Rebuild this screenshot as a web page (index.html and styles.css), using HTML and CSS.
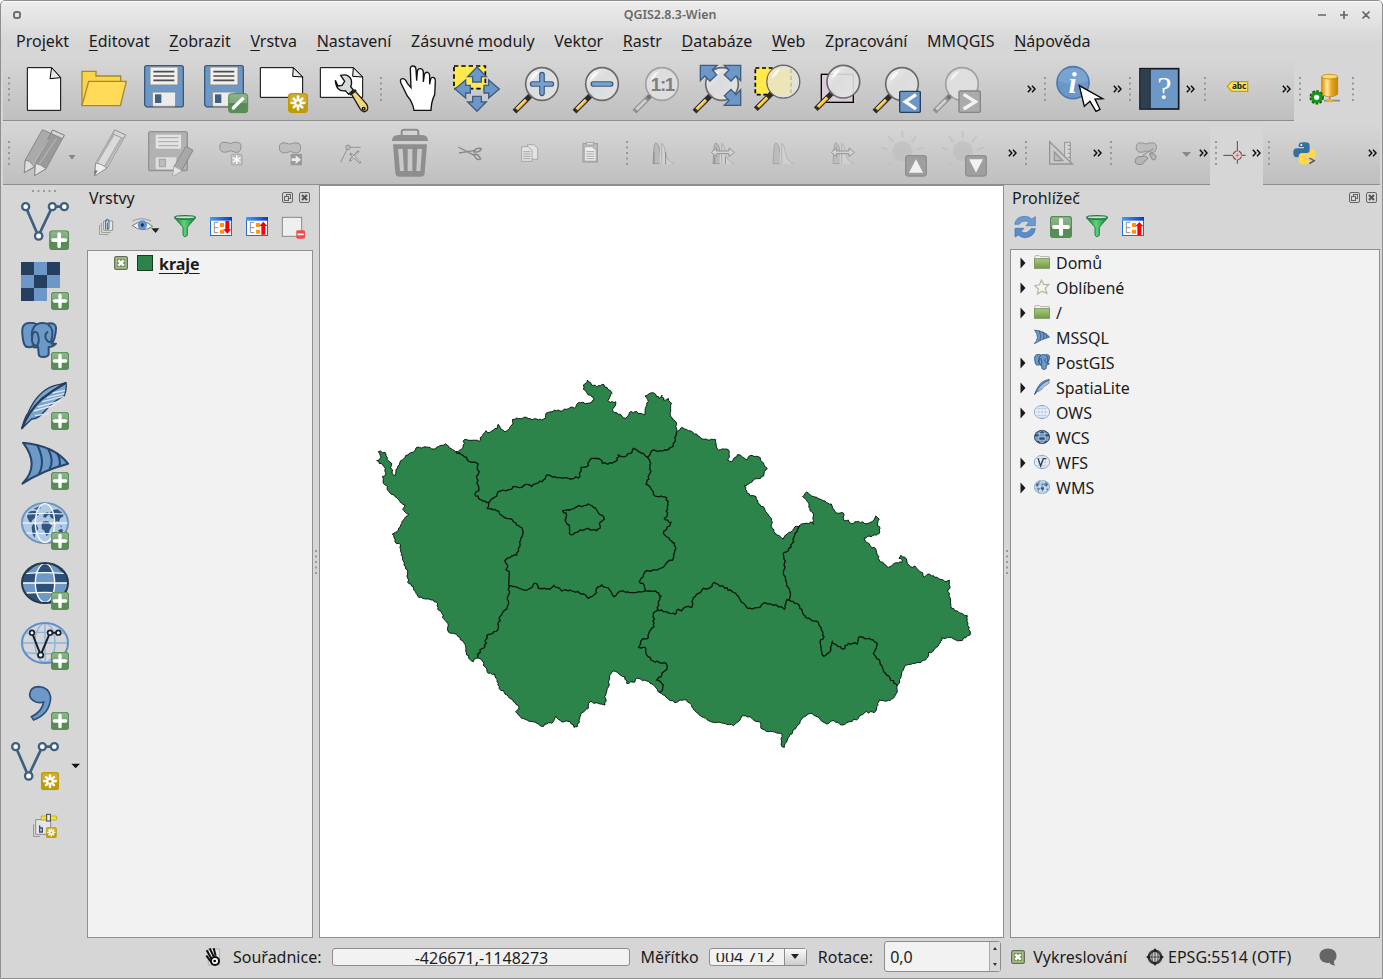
FILE: index.html
```html
<!DOCTYPE html>
<html lang="cs">
<head>
<meta charset="utf-8">
<title>QGIS2.8.3-Wien</title>
<link rel="stylesheet" href="styles.css">
</head>
<body>
<svg class="defs" width="0" height="0">
  <defs>
    <linearGradient id="gGreen" x1="0" y1="0" x2="0" y2="1"><stop offset="0" stop-color="#8db58d"/><stop offset=".5" stop-color="#79a679"/><stop offset=".52" stop-color="#568a52"/><stop offset="1" stop-color="#5b8f58"/></linearGradient>
    <linearGradient id="gLens" x1="0" y1="0" x2="1" y2="1"><stop offset="0" stop-color="#f6f6f6"/><stop offset=".4" stop-color="#dedede"/><stop offset="1" stop-color="#e6e6e6"/></linearGradient>
    <linearGradient id="gFunnel"><stop offset="0" stop-color="#1d7a3c"/><stop offset=".45" stop-color="#5ed37c"/><stop offset="1" stop-color="#17803a"/></linearGradient>
    <linearGradient id="gDb"><stop offset="0" stop-color="#d99500"/><stop offset=".35" stop-color="#ffe9a0"/><stop offset=".6" stop-color="#e8a820"/><stop offset="1" stop-color="#c98300"/></linearGradient>
    <linearGradient id="gFold" x1="0" y1="0" x2="0" y2="1"><stop offset="0" stop-color="#aacb7f"/><stop offset="1" stop-color="#6f9c3d"/></linearGradient>
    <linearGradient id="gBlueTop"><stop offset="0" stop-color="#3fa0ff"/><stop offset="1" stop-color="#0a38c8"/></linearGradient>
    <symbol id="plus" viewBox="0 0 54 54"><rect x="1" y="1" width="52" height="52" rx="8" fill="url(#gGreen)" stroke="#568a52" stroke-width="3"/><path d="M27 10v34M10 27h34" stroke="#fff" stroke-width="10" stroke-linecap="round"/></symbol>
    <symbol id="newb" viewBox="0 0 60 60"><rect x="2" y="2" width="56" height="56" rx="9" fill="#cfae2f" stroke="#c09a00" stroke-width="4"/><path d="M4 30h52v18q0 8-8 8H12q-8 0-8-8z" fill="#c09a00"/><path d="M30 11v38M11 30h38M17 17l26 26M43 17L17 43" stroke="#fff" stroke-width="8" stroke-linecap="round"/><circle cx="30" cy="30" r="5" fill="#c09a00"/></symbol>
    <symbol id="disk" viewBox="0 0 120 128"><path d="M8 2h104q6 0 6 6v112q0 6-6 6H8l-6-6V8q0-6 6-6z" fill="#6d97c4" stroke="#3b5a7c" stroke-width="4"/><path d="M18 6h84v50q0 4-4 4H22q-4 0-4-4z" fill="#f0f0ee" stroke="#8a8a8a" stroke-width="3"/><path d="M28 20h63M28 33h63M28 46h63" stroke="#4d4d4d" stroke-width="5"/><rect x="25" y="81" width="70" height="43" rx="4" fill="#ececec" stroke="#8d8d8d" stroke-width="3"/><rect x="33" y="88" width="19" height="26" fill="#3f5f83"/></symbol>
    <g id="mag"><path d="M-36 36L-77 77" stroke="#2a2a2a" stroke-width="16" stroke-linecap="square"/><path d="M-48 48L-76 76" stroke="#ffc62e" stroke-width="9"/><path d="M-50 46L-78 74" stroke="#fff2b8" stroke-width="3"/><circle r="49" fill="url(#gLens)" fill-opacity=".9" stroke="#6a6a6a" stroke-width="5"/><path d="M-36-8Q-32-34-8-38Q-18-20-36-8z" fill="#fff" fill-opacity=".8"/></g>
    <g id="magGrey"><path d="M-36 36L-77 77" stroke="#8f8f8f" stroke-width="16" stroke-linecap="square"/><path d="M-48 48L-77 77" stroke="#cfcfcf" stroke-width="9"/><circle r="49" fill="#dedede" stroke="#a0a0a0" stroke-width="5"/><path d="M-36-8Q-32-34-8-38Q-18-20-36-8z" fill="#f3f3f3"/><circle cx="-39" cy="39" r="6" fill="#707070"/></g>
    <symbol id="vshape" viewBox="0 0 150 124"><path d="M17 18L55 106L97 18H133" fill="none" stroke="#3f5f80" stroke-width="8"/><g fill="#fff" stroke="#3f5f80" stroke-width="7"><circle cx="17" cy="18" r="10.500"/><circle cx="97" cy="18" r="10.500"/><circle cx="133" cy="18" r="10.500"/><circle cx="56" cy="106" r="11"/></g></symbol>
    <symbol id="chev" viewBox="0 0 9 8"><path d="M.8.8L3.800 4L.8 7.200M5 .8L8 4L5 7.200" fill="none" stroke="#111" stroke-width="1.500"/></symbol>
    <symbol id="dotsV" viewBox="0 0 2 24"><path d="M0 1h2M0 6.500h2M0 12h2M0 17.500h2M0 23h2" stroke="#989898" stroke-width="2"/></symbol>
    <symbol id="dotsH" viewBox="0 0 24 2"><path d="M1 0v2M6.500 0v2M12 0v2M17.500 0v2M23 0v2" stroke="#989898" stroke-width="2"/></symbol>
    <symbol id="funnel" viewBox="0 0 66 68"><ellipse cx="33" cy="7" rx="31" ry="5" fill="#bdebc6" stroke="#1f7a3d" stroke-width="4"/><path d="M2 9Q33 19 64 9L40 37V61L32 66L27 60V37z" fill="url(#gFunnel)" stroke="#2a7d45" stroke-width="3"/></symbol>
    <symbol id="treeic" viewBox="0 0 66 57"><rect x="1.500" y="1.500" width="63" height="54" fill="#fff" stroke="#2668d8" stroke-width="3"/><rect width="66" height="11" fill="url(#gBlueTop)"/><path d="M25 16H13V47H25M13 32h12" fill="none" stroke="#909090" stroke-width="3"/><path d="M30 18h12v12H30zM30 38h12v12H30z" fill="#ff9416"/></symbol>
    <symbol id="float" viewBox="0 0 11 11"><rect x=".5" y=".5" width="10" height="10" rx="1.500" fill="none" stroke="#666"/><rect x="4.500" y="2.500" width="4" height="4" fill="none" stroke="#666"/><rect x="2.500" y="4.500" width="4" height="4" fill="#d6d6d6" stroke="#666"/></symbol>
    <symbol id="closeic" viewBox="0 0 11 11"><rect x=".5" y=".5" width="10" height="10" rx="1.500" fill="none" stroke="#666"/><path d="M3 3l5 5M8 3l-5 5" stroke="#555" stroke-width="2"/></symbol>
    <symbol id="check" viewBox="0 0 42 42"><rect x="2" y="2" width="38" height="38" rx="5" fill="#adc588" stroke="#666b5c" stroke-width="4"/><rect x="10" y="10" width="22" height="22" fill="#5f7a4b" stroke="#71905a" stroke-width="3"/><path d="M13 13l16 16M29 13L13 29" stroke="#fff" stroke-width="8"/></symbol>
    <symbol id="arrowR" viewBox="0 0 6 12"><path d="M.5.500L5.500 6L.5 11.500z" fill="#1b1b1b"/></symbol>
    <symbol id="folder" viewBox="0 0 48 42"><path d="M2 8L4 2H16L19 5H46V20H2z" fill="#f5f5f5" stroke="#b1b1b1" stroke-width="3"/><rect x="1.500" y="11" width="45" height="29" fill="url(#gFold)" stroke="#86946f" stroke-width="3"/></symbol>
    <symbol id="sail" viewBox="0 0 144 130"><path d="M5 3Q100 12 140 66Q60 88 3 126Q58 72 5 3z" fill="#6d99c8" stroke="#27446a" stroke-width="6" stroke-linejoin="round"/><path d="M47 9Q74 60 52 98M80 20Q100 60 84 82M107 34Q120 58 114 74" fill="none" stroke="#27446a" stroke-width="6"/></symbol>
    <symbol id="elephant" viewBox="0 0 110 110"><path d="M23 76Q8 80 5 35Q1 3 30 3Q42 3 48 8Q64 1 78 6Q108 0 106 22Q104 55 92 66H106Q98 76 84 76V98Q82 106 68 106Q54 106 54 96L52 74Q44 82 36 73Q29 79 23 76z" fill="#6d99c8" stroke="#2e5078" stroke-width="6" stroke-linejoin="round"/><path d="M48 8Q30 18 34 56Q36 73 48 72Q60 60 50 34Q34 20 34 60M82 9Q102 20 92 58Q84 66 76 52Q70 38 82 30" fill="none" stroke="#2e5078" stroke-width="6"/></symbol>
    <symbol id="feather" viewBox="0 0 140 144"><path d="M3 140Q10 108 22 92Q50 28 100 12Q122 8 135 3Q138 22 130 42Q98 58 72 88Q52 112 32 112Z" fill="#7ca6d2" stroke="#27405c" stroke-width="4"/><path d="M42 102l42-6M38 88l66-18M50 76l70-18M64 60l64-16M78 48l52-12M94 34l38-8" stroke="#dce9f6" stroke-width="4"/><path d="M3 140Q22 90 62 52Q94 26 135 3" fill="none" stroke="#263c56" stroke-width="7"/></symbol>
    <symbol id="gdark" viewBox="0 0 144 126"><ellipse cx="72" cy="63" rx="69" ry="60" fill="#2d5078"/><path d="M46 33h52l3 30H43zM4 63H43q0 15 4 29H16Q5 80 4 63zM140 63H101q0 15-4 29h31Q139 80 140 63zM47 92h50q-8 22-25 30q-17-8-25-30zM20 32Q40 10 60 6Q50 15 47 32zM124 32Q104 10 84 6Q94 15 97 32z" fill="#6d99c8"/><path d="M16 34Q72 30 128 34M4 63h136M16 93q56-4 112 0" fill="none" stroke="#fff" stroke-width="4"/><ellipse cx="72" cy="63" rx="29" ry="58" fill="none" stroke="#fff" stroke-width="4"/><ellipse cx="72" cy="63" rx="69" ry="60" fill="none" stroke="#28394e" stroke-width="6"/></symbol>
    <symbol id="gline" viewBox="0 0 144 126"><g fill="none" stroke="#8db2dd" stroke-width="4"><ellipse cx="72" cy="63" rx="30" ry="59"/><path d="M15 34q57-7 114 0M3 63h138M15 92q57 7 114 0M72 4v118"/></g><ellipse cx="72" cy="63" rx="69" ry="60" fill="none" stroke="#5d8fcb" stroke-width="6"/></symbol>
    <symbol id="gland" viewBox="0 0 144 126"><ellipse cx="72" cy="63" rx="69" ry="60" fill="#b0cae6" stroke="#6e95c2" stroke-width="6"/><path d="M20 34l8-6 12-2 10 4 4 8-8 4-4 6-8 6-4 10-6-6-6-14zM38 20l18-8 4 6-10 6zM36 66l12 4 4 10-8 12-4 16-6-14-2-18zM62 66l6-8 14 0 6 10 6 2-8 14-4 14-6 4-6-16-8-6zM66 44l4-10 10-4 6 6-8 6-4 6zM86 34l10-10 14-2 18 14-2 8-8 4-4 12-6-4-4 6-6-12-8-2-4-8zM112 84l12-4 2 12-10 4zM116 70l8 4-4 2z" fill="#315780"/><ellipse cx="72" cy="63" rx="29" ry="58" fill="none" stroke="#fff" stroke-width="4"/><path d="M16 36q56-4 112 0M4 63h136M16 93q56 4 112 0" fill="none" stroke="#fff" stroke-width="3"/></symbol>
    <symbol id="curve" viewBox="0 0 70 70"><path d="M3 67L5 35Q6 2 12 3Q26 4 28 67z" fill="#b9b9b9" stroke="#8c8c8c" stroke-width="2"/><path d="M24 67Q24 10 31 3Q39 4 44 40Q52 64 69 67z" fill="#d3d3d3"/><path d="M30 66V4Q38 8 42 38Q50 64 69 67" fill="none" stroke="#a6a6a6" stroke-width="2.500"/></symbol>
    <symbol id="sun" viewBox="0 0 140 140"><circle cx="70" cy="68" r="30" fill="#bdbdbd"/><path d="M70 6v22M28 22l14 18M112 22L98 40M6 56l20 7M134 56l-20 7M28 112l10-10" stroke="#bdbdbd" stroke-width="6"/></symbol>
    <symbol id="blob" viewBox="0 0 70 40"><path d="M3 20Q2 2 22 5Q34 12 46 5Q68 2 67 18Q66 38 50 35Q36 26 24 34Q4 38 3 20z" fill="#bdbdbd" stroke="#929292" stroke-width="3"/></symbol>
  </defs>
</svg>

<div class="window">
  <div class="titlebar">
    <span class="win-menu"></span>
    <span class="title">QGIS2.8.3-Wien</span>
    <svg class="win-btns" width="54" height="10" viewBox="0 0 54 10"><path d="M1 5h8M23 5h8M27 1v8M45.500 1.500l7 7M52.500 1.500l-7 7" stroke="#666" stroke-width="1.700"/></svg>
  </div>
  <div class="menubar">
    <span>Pro<u>j</u>ekt</span><span><u>E</u>ditovat</span><span><u>Z</u>obrazit</span><span><u>V</u>rstva</span><span><u>N</u>astavení</span><span>Zásuvné <u>m</u>oduly</span><span>Vekt<u>o</u>r</span><span><u>R</u>astr</span><span><u>D</u>atabáze</span><span><u>W</u>eb</span><span>Zpra<u>c</u>ování</span><span>MMQGIS</span><span><u>N</u>ápověda</span>
  </div>

  <div class="row">
    <div class="bar bar-main">
      <div class="slot w11"><svg class="dv"><use href="#dotsV"/></svg></div>
      <svg class="ic" viewBox="42 177 180 180"><path d="M82 203H155L182 233V331H82z" fill="#fff" stroke="#000" stroke-width="3"/><path d="M155 203L150 236L182 233z" fill="#e8e8e8" stroke="#000" stroke-width="3"/></svg>
      <svg class="ic" viewBox="222 177 180 180"><path d="M246 317V214h42v14h74v22" fill="#fbd44c" stroke="#a38a2c" stroke-width="4"/><path d="M246 317L266 244H379L361 317z" fill="#ffdb57" stroke="#a38a2c" stroke-width="4"/></svg>
      <svg class="ic" viewBox="402 177 180 180"><use href="#disk" x="432" y="195" width="120" height="128"/></svg>
      <svg class="ic" viewBox="582 177 180 180"><use href="#disk" x="612" y="195" width="120" height="128"/><rect x="686" y="281" width="57" height="57" rx="8" fill="url(#gGreen)" stroke="#568a52" stroke-width="3"/><path d="M700 324l28-28" stroke="#fff" stroke-width="10" stroke-linecap="round"/></svg>
      <svg class="ic" viewBox="762 177 180 180"><path d="M781 203H880L908 231V292H781z" fill="#fff" stroke="#000" stroke-width="3"/><path d="M880 203L878 229L908 231z" fill="#e8e8e8" stroke="#000" stroke-width="3"/><use href="#newb" x="864" y="279" width="60" height="60"/></svg>
      <svg class="ic" viewBox="942 177 180 180"><path d="M961 203H1060L1088 231V292H961z" fill="#fff" stroke="#000" stroke-width="3"/><path d="M1060 203L1058 229L1088 231z" fill="#e8e8e8" stroke="#000" stroke-width="3"/><path d="M1006 241L1014 258L1026 256L1034 244L1022 226Q1046 220 1054 240Q1056 254 1052 260L1060 270L1046 283L1036 272Q1008 276 1006 241z" fill="#d5dbd8" stroke="#111" stroke-width="4"/><path d="M1053 280L1080 326Q1090 342 1102 330Q1106 318 1096 308L1066 274z" fill="#f0d779" stroke="#222" stroke-width="4"/><path d="M1049 284L1068 270" stroke="#222" stroke-width="8"/><circle cx="1091" cy="326" r="4" fill="#f0d779" stroke="#111" stroke-width="4"/></svg>
      <div class="slot w13"><svg class="dv"><use href="#dotsV"/></svg></div>
      <svg class="ic" viewBox="1161 177 180 180"><path d="M1242 331Q1238 306 1222 288L1203 250Q1198 236 1208 236Q1216 236 1222 250L1233 263L1231 206Q1232 197 1240 198Q1247 198 1248 208L1250 242L1252 214Q1254 205 1262 206Q1269 207 1270 216V246L1273 224Q1276 215 1283 217Q1289 219 1289 227V253L1292 237Q1296 230 1302 233Q1307 236 1306 245L1304 284Q1294 304 1293 331z" fill="#fff" stroke="#111" stroke-width="4"/></svg>
      <svg class="ic" viewBox="21 27 180 180"><rect x="42" y="48" width="94" height="68" fill="#ffe94d" stroke="#000" stroke-width="5" stroke-dasharray="13 9"/><path d="M111 51L139 80H124V96H98V80H83zM111 184L139 156H124V139H98V156H83zM45 117L77 90V106H91V129H77V144zM178 117L146 90V106H132V129H146V144z" fill="#6d97c7" stroke="#3d5d85" stroke-width="4"/></svg>
      <svg class="ic" viewBox="201 27 180 180"><use href="#mag" x="306" y="102"/><path d="M306 74v56M278 102h56" stroke="#36587f" stroke-width="17" stroke-linecap="round"/><path d="M306 74v56M278 102h56" stroke="#76a2d2" stroke-width="10" stroke-linecap="round"/></svg>
      <svg class="ic" viewBox="381 27 180 180"><use href="#mag" x="486" y="102"/><path d="M460 102h52" stroke="#36587f" stroke-width="17" stroke-linecap="round"/><path d="M460 102h52" stroke="#76a2d2" stroke-width="10" stroke-linecap="round"/></svg>
      <svg class="ic" viewBox="561 27 180 180"><use href="#magGrey" x="666" y="102"/><text x="667" y="122" text-anchor="middle" class="t11">1:1</text></svg>
      <svg class="ic" viewBox="741 27 180 180"><use href="#mag" x="846" y="102"/><path d="M781 46H831L817 60L830 74L810 93L794 78L781 92zM902 46H853L867 60L853 74L873 93L888 78L902 92zM902 166H853L867 151L853 137L873 118L888 134L902 119z" fill="#6d97c7" stroke="#3d5d85" stroke-width="4"/></svg>
      <svg class="ic" viewBox="921 27 180 180"><rect x="946" y="54" width="108" height="80" fill="#ffe94d" stroke="#000" stroke-width="5" stroke-dasharray="12 8"/><use href="#mag" x="1030" y="95"/><circle cx="1030" cy="95" r="47" fill="#e4e2d8"/><path d="M983 95Q982 66 1005 56H1053V134H1003Q984 120 983 95z" fill="#ede4b8"/><path d="M1053 58V132" stroke="#c3bfa9" stroke-width="5" stroke-dasharray="12 8"/><path d="M994 87Q998 61 1022 57Q1012 75 994 87z" fill="#fbf9ee"/></svg>
      <svg class="ic" viewBox="1101 27 180 180"><rect x="1144" y="73" width="96" height="84" fill="#dccbdc" stroke="#000" stroke-width="4"/><use href="#mag" x="1210" y="95"/></svg>
      <svg class="ic" viewBox="1281 27 180 180"><use href="#mag" x="1386" y="102"/><rect x="1379" y="124" width="62" height="63" rx="3" fill="#6d97c7" stroke="#24415f" stroke-width="4"/><path d="M1428 134L1396 155L1428 177" fill="none" stroke="#fff" stroke-width="10"/></svg>
      <svg class="ic" viewBox="81 177 180 180"><use href="#magGrey" x="186" y="252"/><rect x="177" y="273" width="64" height="64" rx="4" fill="#ababab" stroke="#858585" stroke-width="4"/><path d="M191 283L226 305L191 327" fill="none" stroke="#f2f2f2" stroke-width="10"/></svg>
      <div class="slot w50 end"><svg class="cv"><use href="#chev"/></svg></div>
      <div class="slot w16"><svg class="dv"><use href="#dotsV"/></svg></div>
      <svg class="ic w58" viewBox="459 177 174 180"><circle cx="519" cy="248" r="48" fill="#6a96c8" stroke="#4d79aa" stroke-width="5"/><path d="M474 242Q476 204 519 204Q562 204 564 242Q519 262 474 242z" fill="#84abd6" opacity=".6"/><text x="518" y="278" text-anchor="middle" class="ti">i</text><path d="M538 257L553 319L570 304L588 334L600 328L585 297L608 296z" fill="#fff" stroke="#000" stroke-width="4"/></svg>
      <div class="slot w12"><svg class="cv"><use href="#chev"/></svg></div>
      <div class="slot w14"><svg class="dv"><use href="#dotsV"/></svg></div>
      <svg class="ic w45" viewBox="711 177 135 180"><rect x="720" y="206" width="116" height="121" fill="#6d97c7" stroke="#15191f" stroke-width="5"/><path d="M722 208h26v117h-26z" fill="#2e3f50"/><path d="M750 208v117" stroke="#15191f" stroke-width="4"/><text x="793" y="298" text-anchor="middle" class="tq">?</text></svg>
      <div class="slot w17"><svg class="cv"><use href="#chev"/></svg></div>
      <div class="slot w11"><svg class="dv"><use href="#dotsV"/></svg></div>
      <svg class="ic w56" viewBox="930 177 168 180"><path d="M982 259L995 245H1043V274H995z" fill="#ffe552" stroke="#c5a20f" stroke-width="4"/><text x="1017" y="268" text-anchor="middle" class="tabc">abc</text></svg>
      <div class="slot w28 end2"><svg class="cv"><use href="#chev"/></svg></div>
    </div>
    <div class="bar plain">
      <div class="slot w12"><svg class="dv"><use href="#dotsV"/></svg></div>
      <svg class="ic w38" viewBox="1218 177 114 180"><path d="M1265 230V283Q1289 298 1313 283V230z" fill="url(#gDb)" stroke="#b77c00" stroke-width="2"/><ellipse cx="1289" cy="230" rx="24" ry="7" fill="#ffd969" stroke="#b77c00" stroke-width="2"/><path d="M1289 290v10M1272 302h48" stroke="#8c8c8c" stroke-width="5"/><path d="M1280 298h18v9h-18z" fill="#eab32b"/><circle cx="1250" cy="292" r="17" fill="none" stroke="#0f4f0f" stroke-width="9" stroke-dasharray="7 4"/><circle cx="1250" cy="292" r="13" fill="#fff" stroke="#149a12" stroke-width="10"/></svg>
      <div class="slot w18"><svg class="dv"><use href="#dotsV"/></svg></div>
    </div>
  </div>

  <div class="row">
    <div class="bar">
      <div class="slot w11"><svg class="dv"><use href="#dotsV"/></svg></div>
      <svg class="ic w52" viewBox="42 369 147 180"><g stroke="#888" stroke-width="3" stroke-linejoin="round"><path d="M127 389L161 404L106 500L73 518L76 480z" fill="#aaa"/><path d="M76 480L73 518L103 500L88 484z" fill="#dedede"/><path d="M158 390L193 406L138 506L104 527L106 490z" fill="#9a9a9a"/><path d="M158 390L193 406L187 416L153 400z" fill="#d7d7d7"/><path d="M106 490L104 527L138 506L122 495z" fill="#e4e4e4"/></g><path d="M144 420L100 494M170 414L118 492" stroke="#bcbcbc" stroke-width="3"/></svg>
      <svg class="w15" viewBox="0 0 15 60"><path d="M5.500 31.500h7L9 36z" fill="#858585"/></svg>
      <svg class="ic w62" viewBox="234 369 186 180"><g stroke="#969696" stroke-width="3" stroke-linejoin="round"><path d="M344 390L377 405L321 504L284 528L287 489z" fill="#dadada"/><path d="M344 390L377 405L370 416L338 401z" fill="#d7d7d7"/><path d="M287 489L284 528L321 504L303 493z" fill="#eee"/></g><path d="M340 405L290 488M365 414L315 500" stroke="#b0b0b0" stroke-width="7"/><path d="M283 528l10-16-9-2z" fill="#777"/></svg>
      <svg class="ic" viewBox="420 369 180 180"><rect x="446" y="395" width="116" height="117" rx="6" fill="#b2b2b2" stroke="#929292" stroke-width="4"/><rect x="467" y="404" width="76" height="42" fill="#e3e3e3"/><path d="M475 413h60M475 425h60M475 437h60" stroke="#b0b0b0" stroke-width="4"/><rect x="467" y="472" width="62" height="36" rx="3" fill="#ddd"/><rect x="478" y="478" width="18" height="22" fill="#bcbcbc" stroke="#a0a0a0" stroke-width="3"/><path d="M558 439L579 451L545 512L519 528L522 500z" fill="#a8a8a8" stroke="#888" stroke-width="3"/><path d="M522 500L519 528L545 512z" fill="#e2e2e2"/></svg>
      <svg class="ic" viewBox="600 369 180 180"><use href="#blob" x="656" y="422" width="70" height="40"/><rect x="694" y="463" width="32" height="32" rx="3" fill="#c2c2c2" stroke="#a9a9a9" stroke-width="3"/><path d="M710 466v26M698 473l24 13M722 473l-24 13" stroke="#fff" stroke-width="4"/></svg>
      <svg class="ic" viewBox="780 369 180 180"><use href="#blob" x="835" y="424" width="70" height="40"/><path d="M872 462h34v34h-34z" fill="#999"/><path d="M875 475h12v-9l16 13l-16 13v-9h-12z" fill="#eaeaea"/></svg>
      <svg class="ic" viewBox="960 369 180 180"><path d="M1022 487L1044 442H1082" fill="none" stroke="#929292" stroke-width="3"/><circle cx="1044" cy="442" r="7" fill="#bbb" stroke="#929292" stroke-width="3"/><path d="M1049 483L1076 453M1050 460L1082 489" stroke="#8f8f8f" stroke-width="7"/><path d="M1053 480L1074 457M1054 464L1080 486" stroke="#ddd" stroke-width="3"/></svg>
      <svg class="ic" viewBox="1140 369 180 180"><path d="M1205 407V396Q1205 389 1212 389H1248Q1255 389 1255 396V407" fill="none" stroke="#8e8e8e" stroke-width="6"/><path d="M1176 423Q1176 405 1194 405H1266Q1284 405 1284 423zM1179 433H1281L1274 520Q1273 530 1263 530H1197Q1187 530 1186 520z" fill="#8e8e8e"/><path d="M1194 447h14l4 66h-12zM1223 447h14v66h-14zM1252 447h14l-5 66h-12z" fill="#c9c9c9"/></svg>
      <svg class="ic" viewBox="0 219 180 180"><path d="M55 291L104 317M57 309L106 301" stroke="#8a8a8a" stroke-width="4"/><path d="M102 302q8-10 22-6q-2 11-22 10zM102 313q14-2 20 14q-14 6-20-14z" fill="none" stroke="#858585" stroke-width="4"/></svg>
      <svg class="ic" viewBox="180 219 180 180"><g fill="#e2e2e2" stroke="#a0a0a0" stroke-width="2.500"><path d="M262 284h20l11 11v33h-31z"/><path d="M245 290h20l11 11v33h-31z"/></g><path d="M250 305h21M250 312h21M250 319h21M250 326h21" stroke="#9a9a9a" stroke-width="2.500"/></svg>
      <svg class="ic" viewBox="360 219 180 180"><rect x="429" y="281" width="43" height="55" fill="#bcbcbc" stroke="#989898" stroke-width="3"/><rect x="440" y="277" width="21" height="8" fill="#ddd" stroke="#999" stroke-width="2"/><path d="M434 290h22l12 11v32h-34z" fill="#ededed" stroke="#a0a0a0" stroke-width="2"/><path d="M439 305h24M439 312h24M439 319h24M439 326h24" stroke="#9a9a9a" stroke-width="2.500"/></svg>
      <div class="slot w13"><svg class="dv"><use href="#dotsV"/></svg></div>
      <svg class="ic" viewBox="579 219 180 180"><use href="#curve" x="635" y="276" width="70" height="68"/><path d="M642 306v36M677 306v36" stroke="#8b8b8b" stroke-width="3"/></svg>
      <svg class="ic" viewBox="759 219 180 180"><use href="#curve" x="815" y="276" width="70" height="68"/><path d="M814 307l15-13v9h38v-9l16 13l-16 13v-9h-38v9z" fill="#d4d4d4" stroke="#949494" stroke-width="3"/><path d="M824 320v22M856 320v22" stroke="#8b8b8b" stroke-width="3"/></svg>
      <svg class="ic" viewBox="939 219 180 180"><use href="#curve" x="995" y="276" width="70" height="68" opacity=".8"/></svg>
      <svg class="ic" viewBox="1119 219 180 180"><use href="#curve" x="1175" y="276" width="70" height="68" opacity=".8"/><path d="M1174 307l15-13v9h38v-9l16 13l-16 13v-9h-38v9z" fill="#d4d4d4" stroke="#949494" stroke-width="3"/></svg>
      <svg class="ic" viewBox="-81 369 180 180"><use href="#sun" x="-63" y="386" width="140" height="140" opacity=".6"/><rect x="17" y="467" width="62" height="61" rx="8" fill="#9f9f9f" stroke="#8f8f8f" stroke-width="4"/><path d="M48 478L69 518H27z" fill="#f1f1f1"/></svg>
      <svg class="ic" viewBox="99 369 180 180"><use href="#sun" x="118" y="386" width="140" height="140" opacity=".6"/><rect x="197" y="467" width="62" height="61" rx="8" fill="#9f9f9f" stroke="#8f8f8f" stroke-width="4"/><path d="M228 518L249 478H207z" fill="#f1f1f1"/></svg>
      <div class="slot w27 end3"><svg class="cv"><use href="#chev"/></svg></div>
      <div class="slot w11"><svg class="dv"><use href="#dotsV"/></svg></div>
      <svg class="ic w59" viewBox="393 369 177 180"><rect x="494" y="427" width="17" height="64" fill="#d6d6d6" stroke="#959595" stroke-width="3"/><path d="M449 425L517 492H449z" fill="#cbcbcb" stroke="#959595" stroke-width="4"/><path d="M463 456L488 482H463z" fill="#bbb" stroke="#959595" stroke-width="4"/><path d="M503 436h8M503 448h8M503 460h8M503 472h8" stroke="#959595" stroke-width="3"/></svg>
      <div class="slot w15"><svg class="cv"><use href="#chev"/></svg></div>
      <div class="slot w12"><svg class="dv"><use href="#dotsV"/></svg></div>
      <svg class="ic w59" viewBox="651 369 177 180"><g fill="#b6b6b6" stroke="#888" stroke-width="3"><use href="#blob" x="702" y="424" width="74" height="38"/><path d="M706 482Q708 468 722 470Q736 464 744 474Q740 482 733 484Q730 496 716 493Q704 492 706 482z"/><path d="M748 462Q766 458 768 470Q768 482 757 479z"/></g><path d="M728 466L760 446" stroke="#888" stroke-width="3"/></svg>
      <svg class="w20" viewBox="0 0 20 60"><path d="M6 28.500h9L10.500 33.500z" fill="#8a8a8a"/></svg>
      <div class="slot w14"><svg class="cv"><use href="#chev"/></svg></div>
    </div>
    <div class="bar plain">
      <div class="slot w11"><svg class="dv"><use href="#dotsV"/></svg></div>
      <svg class="ic w28" viewBox="963 369 84 180"><path d="M1012 423v31M1012 478v13M970 466h29M1024 466h13" stroke="#4a4f4a" stroke-width="3"/><circle cx="1012" cy="466" r="13" fill="none" stroke="#b03c3c" stroke-width="4" stroke-dasharray="13 7" stroke-dashoffset="-4"/><path d="M1012 460v12M1006 466h12" stroke="#777" stroke-width="2"/></svg>
      <div class="slot w14"><svg class="cv"><use href="#chev"/></svg></div>
    </div>
    <div class="bar">
      <div class="slot w12"><svg class="dv"><use href="#dotsV"/></svg></div>
      <svg class="ic w59" viewBox="1125 369 177 180"><path d="M1211 427Q1229 425 1229 436V450Q1229 459 1220 459H1204Q1196 460 1196 472H1188Q1179 470 1180 456Q1180 446 1190 445H1212V441H1196V434Q1197 427 1211 427z" fill="#35709f"/><path d="M1213 493Q1196 493 1196 482V471Q1197 461 1206 461H1222Q1231 460 1232 446H1238Q1246 448 1246 462Q1246 474 1238 475H1213V479H1229V485Q1228 493 1213 493z" fill="#ffd94a"/><circle cx="1204" cy="435" r="3" fill="#fff"/><path d="M1228 474L1243 482L1228 491" fill="none" stroke="#555" stroke-width="4"/></svg>
      <div class="slot w46 end4"><svg class="cv"><use href="#chev"/></svg></div>
    </div>
  </div>

  <div class="body">
    <div class="sidebar">
      <div class="grip"><svg width="24" height="2"><use href="#dotsH"/></svg></div>
      <svg viewBox="9 42 252 180"><use href="#vshape" x="60" y="62" width="150" height="124"/><use href="#plus" x="147" y="151" width="61" height="59"/></svg>
      <svg viewBox="9 222 252 180"><path d="M63 246h39v39H63zM141 246h39v39h-39zM102 285h39v39h-39zM63 324h39v39H63z" fill="#263f5f"/><path d="M102 246h39v39h-39zM63 285h39v39H63zM141 285h39v39h-39zM102 324h39v39h-39z" fill="#6d97c7"/><use href="#plus" x="153" y="336" width="54" height="54"/></svg>
      <svg viewBox="9 402 252 180"><use href="#elephant" x="62" y="425" width="110" height="110"/><use href="#plus" x="153" y="516" width="54" height="54"/></svg>
      <svg viewBox="9 582 252 180"><use href="#feather" x="63" y="605" width="140" height="144"/><use href="#plus" x="153" y="696" width="54" height="54"/></svg>
      <svg viewBox="9 42 252 180"><use href="#sail" x="64" y="65" width="144" height="130"/><use href="#plus" x="153" y="156" width="54" height="54"/></svg>
      <svg viewBox="9 222 252 180"><use href="#gland" x="63" y="246" width="144" height="126"/><use href="#plus" x="153" y="336" width="54" height="54"/></svg>
      <svg viewBox="9 402 252 180"><use href="#gdark" x="63" y="426" width="144" height="126"/><use href="#plus" x="153" y="516" width="54" height="54"/></svg>
      <svg viewBox="9 582 252 180"><use href="#gline" x="63" y="606" width="144" height="126"/><path d="M96 638L122 705L150 638H175" fill="none" stroke="#14202e" stroke-width="6"/><g fill="#fff" stroke="#14202e" stroke-width="5"><circle cx="96" cy="638" r="7"/><circle cx="122" cy="705" r="8"/><circle cx="150" cy="638" r="7"/><circle cx="175" cy="638" r="7"/></g><use href="#plus" x="153" y="696" width="54" height="54"/></svg>
      <svg viewBox="9 762 252 180"><path d="M94 890Q126 876 131 846Q120 850 108 846Q88 838 89 822Q92 800 116 800Q148 802 152 832Q150 882 101 900z" fill="#6d99c8" stroke="#2e5078" stroke-width="5"/><use href="#plus" x="153" y="876" width="54" height="54"/></svg>
      <svg viewBox="9 942 252 180"><use href="#vshape" x="30" y="962" width="150" height="124"/><use href="#newb" x="122" y="1056" width="56" height="55"/><path d="M214 1031h26l-13 14z" fill="#111"/></svg>
      <svg viewBox="9 1122 252 180"><path d="M101 1213V1249H120M107 1199V1243H152V1199z" fill="#e5e5e5" stroke="#8d8d8d" stroke-width="3"/><path d="M119 1216v20h8v-12h-8" fill="none" stroke="#315780" stroke-width="4"/><path d="M124 1188h46v12h-46z" fill="#f0e51e" stroke="#a4a020" stroke-width="2"/><rect x="140" y="1183" width="11" height="20" fill="#eee" stroke="#444" stroke-width="3"/><use href="#newb" x="137" y="1221" width="34" height="33"/></svg>
    </div>

    <div class="panel panel-left">
      <div class="panel-title"><span>Vrstvy</span><svg width="28" height="11"><use href="#float" x="0" width="11" height="11"/><use href="#closeic" x="17" width="11" height="11"/></svg></div>
      <div class="panel-tools">
        <svg viewBox="267 93 108 90"><g fill="#e9e9e6" stroke="#94948e" stroke-width="3"><path d="M299 135v28h26"/><path d="M305 129v28h27"/><path d="M311 123h27v28h-27z"/></g><path d="M317 149V124Q317 118 322 118Q327 118 327 124V144Q326 149 322 148V128" fill="none" stroke="#3c5d9a" stroke-width="3"/></svg>
        <svg viewBox="375 93 108 90"><path d="M397 137Q428 113 458 139Q428 160 397 137z" fill="#f7f7f7" stroke="#777" stroke-width="3"/><path d="M397 123Q425 109 453 123" fill="none" stroke="#999" stroke-width="3"/><circle cx="427" cy="135" r="14" fill="#6491ca"/><circle cx="427" cy="135" r="5" fill="#1b3452"/><path d="M454 145h24l-11 14z" fill="#222"/></svg>
        <svg viewBox="483 93 108 90"><use href="#funnel" x="522" y="105" width="66" height="68"/></svg>
        <svg viewBox="591 93 108 90"><use href="#treeic" x="630" y="111" width="66" height="57"/><path d="M676 123h12v25h6l-12 13l-12-13h6z" fill="#f00"/></svg>
        <svg viewBox="699 93 108 90"><use href="#treeic" x="738" y="111" width="66" height="57"/><path d="M784 164h12v-26h6l-12-13l-12 13h6z" fill="#f00"/></svg>
        <svg viewBox="807 93 108 90"><rect x="847" y="112" width="58" height="57" fill="#efefed" stroke="#8a8a86" stroke-width="3"/><rect x="889" y="151" width="26" height="25" rx="4" fill="#ee4b4b"/><path d="M893 163h18" stroke="#fff" stroke-width="5"/></svg>
      </div>
      <div class="tree tree-left">
        <div class="layer"><svg width="14" height="14"><use href="#check"/></svg><span class="swatch"></span><b>kraje</b></div>
      </div>
    </div>
    <div class="splitter"><svg class="dv"><use href="#dotsV"/></svg></div>
    <div class="map">
      <svg id="map" width="683" height="751" viewBox="-150 -552 2049 2253">
        <polygon class="land" points="25,245 45,247 48,258 55,272 65,280 62,292 68,300 67,312 75,317 78,298 88,285 92,272 105,262 118,250 128,247 138,234 165,230 180,232 190,237 205,230 215,226 226,221 238,234 257,245 275,238 280,225 283,209 300,211 318,211 327,214 338,196 348,182 358,188 370,180 382,175 384,163 392,176 405,186 418,176 426,165 428,148 440,144 455,146 465,141 480,146 500,147 515,150 527,143 528,130 545,125 553,120 570,123 590,118 618,110 625,98 637,97 645,102 665,97 672,90 665,80 655,75 650,68 640,58 640,45 647,40 652,30 662,38 665,46 680,50 692,47 702,44 705,52 718,60 726,70 720,80 714,92 722,97 737,95 735,108 727,118 735,128 755,138 767,145 778,128 795,125 810,130 826,133 828,110 835,95 825,78 842,69 858,74 868,86 876,75 880,90 895,85 905,100 902,110 900,130 910,150 919,158 920,185 937,172 955,182 980,192 1002,208 1020,210 1036,208 1038,222 1046,240 1070,237 1078,245 1078,262 1073,270 1083,276 1095,262 1108,254 1128,270 1140,257 1165,260 1180,278 1192,295 1182,312 1172,325 1150,330 1122,348 1130,362 1140,378 1158,380 1164,400 1180,410 1192,430 1205,452 1207,475 1220,495 1240,507 1252,492 1267,482 1275,470 1290,466 1305,460 1317,462 1321,456 1331,463 1331,435 1320,422 1312,395 1298,380 1310,366 1325,378 1340,382 1365,393 1384,402 1388,415 1405,430 1421,430 1422,452 1435,450 1445,461 1460,455 1495,460 1512,450 1517,438 1528,448 1522,462 1530,475 1528,490 1508,497 1482,505 1492,518 1502,530 1512,532 1522,555 1528,570 1542,582 1550,590 1565,588 1580,578 1595,578 1597,570 1587,565 1592,556 1605,562 1612,580 1628,592 1635,588 1645,600 1658,608 1662,622 1673,612 1685,618 1705,625 1725,635 1738,630 1740,650 1734,665 1742,690 1745,715 1765,725 1780,733 1792,737 1794,760 1800,795 1788,803 1770,812 1750,806 1715,803 1710,820 1695,835 1688,845 1675,848 1670,865 1650,878 1610,885 1600,900 1592,925 1582,945 1582,965 1570,985 1555,991 1527,990 1520,1010 1512,1028 1485,1026 1465,1045 1440,1055 1412,1065 1392,1052 1370,1062 1350,1048 1322,1030 1295,1048 1285,1065 1268,1085 1252,1110 1243,1132 1236,1130 1236,1093 1220,1089 1195,1085 1173,1075 1172,1058 1155,1053 1140,1040 1115,1038 1105,1055 1090,1067 1060,1060 1015,1052 995,1040 978,1025 965,1005 950,990 930,990 920,997 902,992 885,976 868,967 855,950 830,933 800,925 795,936 770,940 765,920 748,913 730,903 718,918 716,950 707,975 705,1005 690,1002 660,995 655,1015 635,1028 627,1050 622,1070 612,1072 600,1055 575,1056 557,1038 550,1055 530,1062 515,1069 495,1056 455,1045 437,1025 447,1012 430,995 415,980 400,962 387,955 385,940 374,912 355,910 345,890 338,875 327,865 318,865 310,875 290,855 287,830 270,802 260,793 242,790 233,780 235,765 222,748 215,730 203,718 203,702 190,690 170,687 147,683 138,670 130,650 113,637 113,600 102,585 98,560 92,545 92,525 75,515 67,492 85,480 92,465 116,433 98,418 105,405 90,395 75,380 52,360 52,350 40,340 37,320 48,312 42,290 20,272 33,262"/>
        <g class="border">
          <polyline points="257,245 290,262 295,273 325,282 322,295 326,310 320,325 326,350 327,362 315,372 330,388 350,398 357,396"/>
          <polyline points="357,396 380,378 385,365 410,362 435,350 450,353 475,343 485,350 500,340 520,330 530,315 560,323 600,327 630,320 633,292 650,290 665,265 690,268 697,280 725,280 742,270 745,255 760,260 785,248 790,235 805,245 820,250 832,262 845,243 890,240 910,228 915,215 920,185"/>
          <polyline points="357,396 352,415 380,422 400,440 425,447 458,480 452,510 445,535 440,555 420,563 404,572 412,585 408,600 418,605 417,648 415,675 412,710 390,740 383,780 350,797 345,830 330,840 322,865"/>
          <polyline points="417,648 435,650 460,660 480,655 490,643 500,641 505,655 540,658 552,646 575,663 600,660 640,672 655,685 675,672 685,650 695,645 718,658 732,680 755,663 800,667 826,662 857,663 873,678 865,695 863,718"/>
          <polyline points="832,262 842,280 840,310 828,342 850,365 855,378 890,383 893,400 890,440 883,445 903,457 880,490 905,512 916,530 910,565 885,585 880,592 860,600 825,605 820,620 808,635 822,645 826,662"/>
          <polyline points="863,718 885,725 900,730 915,733 925,718 935,723 950,710 965,712 968,690 985,670 1000,655 1020,653 1033,637 1055,648 1080,660 1100,675 1120,700 1135,715 1170,712 1180,700 1220,705 1243,718 1250,690 1258,690"/>
          <polyline points="1290,466 1275,490 1267,520 1255,542 1240,550 1245,590 1240,610 1250,640 1260,665 1258,690"/>
          <polyline points="1258,690 1280,700 1295,718 1305,738 1325,752 1345,757 1358,785 1362,800 1352,810 1353,840 1360,858 1380,845 1387,815 1400,825 1420,837 1435,820 1462,822 1465,803 1480,803 1510,810 1522,825 1510,850 1530,875 1540,900 1560,925 1582,947"/>
          <polyline points="863,718 850,730 852,770 838,785 835,803 815,810 806,832 825,832 830,855 850,873 885,878 892,892 875,915 860,930 880,945 878,957 868,967"/>
          <polygon points="578,422 600,420 617,412 655,402 680,420 695,435 703,447 688,460 690,475 680,482 650,475 625,485 610,493 598,490 597,465 585,450 590,435"/>
        </g>
      </svg>
    </div>
    <div class="splitter"><svg class="dv"><use href="#dotsV"/></svg></div>
    <div class="panel panel-right">
      <div class="panel-title"><span>Prohlížeč</span><svg width="28" height="11"><use href="#float" x="0" width="11" height="11"/><use href="#closeic" x="17" width="11" height="11"/></svg></div>
      <div class="panel-tools">
        <svg viewBox="30 78 108 90"><path d="M44 118Q48 94 76 94Q88 95 95 102L106 95V122H78L87 112Q70 102 57 118z" fill="#6b9bd0" stroke="#4477b0" stroke-width="2"/><path d="M106 131Q102 157 74 158Q62 157 55 150L45 156V130H72L63 140Q80 150 93 131z" fill="#5b8dc8" stroke="#3e70aa" stroke-width="2"/></svg>
        <svg viewBox="138 78 108 90"><use href="#plus" x="150" y="93" width="66" height="66"/></svg>
        <svg viewBox="246 78 108 90"><use href="#funnel" x="258" y="90" width="66" height="68"/></svg>
        <svg viewBox="354 78 108 90"><use href="#treeic" x="366" y="96" width="66" height="57"/><path d="M412 150h12v-26h6l-12-13l-12 13h6z" fill="#f00"/></svg>
      </div>
      <div class="tree tree-right">
        <div class="node"><svg class="ar"><use href="#arrowR"/></svg><svg class="ni"><use href="#folder"/></svg>Domů</div>
        <div class="node"><svg class="ar"><use href="#arrowR"/></svg><svg class="ni" viewBox="0 0 16 16"><path d="M7.500 1L9.600 5.600L14.800 5.400L11.300 9.400L12.900 14.400L8 12.200L3.500 15L4.300 10L.8 6.700L5.500 5.800z" fill="#f5f5ef" stroke="#b7b99f" stroke-width="1.300"/></svg>Oblíbené</div>
        <div class="node"><svg class="ar"><use href="#arrowR"/></svg><svg class="ni"><use href="#folder"/></svg>/</div>
        <div class="node"><span class="ar"></span><svg class="ni"><use href="#sail"/></svg>MSSQL</div>
        <div class="node"><svg class="ar"><use href="#arrowR"/></svg><svg class="ni"><use href="#elephant"/></svg>PostGIS</div>
        <div class="node"><svg class="ar"><use href="#arrowR"/></svg><svg class="ni"><use href="#feather"/></svg>SpatiaLite</div>
        <div class="node"><svg class="ar"><use href="#arrowR"/></svg><svg class="ni"><use href="#gline"/></svg>OWS</div>
        <div class="node"><span class="ar"></span><svg class="ni"><use href="#gdark"/></svg>WCS</div>
        <div class="node"><svg class="ar"><use href="#arrowR"/></svg><svg class="ni" viewBox="0 0 48 48"><use href="#gline" width="48" height="48"/><path d="M12 13L20 36L28 14H37" fill="none" stroke="#35414f" stroke-width="4"/></svg>WFS</div>
        <div class="node"><svg class="ar"><use href="#arrowR"/></svg><svg class="ni"><use href="#gland"/></svg>WMS</div>
      </div>
    </div>
  </div>

  <div class="statusbar">
    <svg class="s-ext" width="16" height="20" viewBox="32 52 48 60"><path d="M42 58h34v48H42z" fill="#e4e4e4" stroke="#999" stroke-width="2"/><path d="M37 62l22 38M46 56l14 28M58 56l6 22M36 78l20 26" stroke="#111" stroke-width="6"/><circle cx="62" cy="94" r="12" fill="#fff" stroke="#111" stroke-width="6"/><circle cx="61" cy="94" r="4"/></svg>
    <span class="s-coord">Souřadnice:</span>
    <div class="coord">-426671,-1148273</div>
    <span class="s-scale">Měřítko</span>
    <div class="scale"><div class="scale-val"><span>004 712</span></div><div class="scale-btn"><svg width="8" height="5"><path d="M0 0h8L4 5z" fill="#222"/></svg></div></div>
    <span class="s-rot">Rotace:</span>
    <div class="spin"><span>0,0</span><div class="spin-btn"><svg width="4" height="3"><path d="M0 3h4L2 0z" fill="#333"/></svg><svg width="4" height="3"><path d="M0 0h4L2 3z" fill="#333"/></svg></div></div>
    <svg class="s-check" width="14" height="14"><use href="#check"/></svg>
    <span class="s-render">Vykreslování</span>
    <svg class="s-crs" width="18" height="18" viewBox="0 0 18 18"><circle cx="9" cy="9" r="7.500" fill="#444"/><path d="M9 0L11 3H7zM9 18L11 15H7zM0 9L3 7v4zM18 9L15 7v4z" fill="#222"/><circle cx="9" cy="9" r="5.500" fill="#c8c8c8" stroke="#111"/><path d="M9 3v12M3 9h12M6.500 4q-1.500 5 0 10M11.500 4q1.500 5 0 10" fill="none" stroke="#333" stroke-width=".8"/></svg>
    <span>EPSG:5514 (OTF)</span>
    <svg class="s-msg" width="18" height="18" viewBox="0 0 18 18"><path d="M9 .5C14 .5 17.500 3.500 17.500 7.500Q17.500 11.500 15 13Q14.500 16 16.500 17.500Q12 17.500 10.500 14.800C4 15.500 .5 12 .5 7.500C.5 3.500 4 .5 9 .5z" fill="#666"/></svg>
  </div>
</div>
<script src="map.js"></script>
</body>
</html>
```
FILE: styles.css
```css
* { box-sizing: border-box; }
body { margin: 0; font: 16px/20px "Noto Sans", sans-serif; color: #1c1c1c; background: #fff; overflow: hidden; }
svg { display: block; flex: none; }
.defs { position: absolute; }
.window { width: 1383px; height: 979px; border: 1px solid #8f8f8f; border-radius: 5px 5px 0 0; background: linear-gradient(#ededed 0, #d6d6d6 42px); display: flex; flex-direction: column; overflow: hidden; }
.titlebar { height: 26px; flex: none; display: flex; align-items: center; justify-content: space-between; padding: 0 11px; border-top: 1px solid #fafafa; }
.win-menu { width: 8px; height: 8px; border: 2px solid #707070; border-radius: 3px; margin-right: 46px; margin-left: 1px; }
.title { font-size: 12.4px; font-weight: 600; color: #6a6a6a; line-height: 14px; margin-right: 54px; margin-left: 10px; padding-top: 1px; }
.menubar { height: 30px; flex: none; display: flex; padding: 4px 0 0 15px; gap: 19.67px; white-space: nowrap; }
u { text-decoration: underline; text-decoration-thickness: 1px; text-underline-offset: 3px; }
.row { height: 64px; flex: none; display: flex; padding-left: 2px; }
.bar { height: 64px; flex: none; display: flex; background: linear-gradient(#d7d7d7, #bfbfbf); border-bottom: 1px solid #8e8e8e; padding-top: 2px; }
.bar.plain { background: none; border-color: transparent; }
.slot { height: 60px; flex: none; display: flex; align-items: center; justify-content: center; }
.end { justify-content: flex-end; padding-right: 1px; }
.end2 { justify-content: flex-end; padding-right: 3px; }
.end3 { justify-content: flex-start; padding-left: 15px; }
.end4 { justify-content: flex-end; padding-right: 3px; }
.ic { width: 60px; height: 60px; overflow: visible; }
.dv { width: 2px; height: 24px; }
.cv { width: 9px; height: 8px; }
.w11 { width: 11px; } .w12 { width: 12px; } .w13 { width: 13px; } .w14 { width: 14px; } .w15 { width: 15px; }
.w16 { width: 16px; } .w17 { width: 17px; } .w18 { width: 18px; } .w20 { width: 20px; } .w27 { width: 27px; }
.w28 { width: 28px; } .w38 { width: 38px; } .w45 { width: 45px; } .w46 { width: 46px; } .w50 { width: 50px; }
.w52 { width: 49px; } .w56 { width: 56px; } .w58 { width: 58px; } .w59 { width: 59px; } .w62 { width: 62px; }
.t11 { font: bold 56px "Liberation Sans", sans-serif; fill: #808080; letter-spacing: -4px; }
.ti { font: italic bold 88px "Liberation Serif", serif; fill: #fff; }
.tq { font: 96px "Liberation Serif", serif; fill: #fff; }
.tabc { font: bold 25px "Noto Sans", sans-serif; fill: #222; letter-spacing: -.5px; }

.body { height: 753px; flex: none; display: flex; }
.sidebar { width: 86px; padding-left: 2px; display: flex; flex-direction: column; }
.sidebar > svg { width: 84px; height: 60px; overflow: visible; }
.grip { height: 9px; flex: none; padding: 5px 0 0 29px; }
.panel { display: flex; flex-direction: column; }
.panel-left { width: 226px; }
.panel-right { width: 370px; }
.panel-title { height: 26px; flex: none; display: flex; justify-content: space-between; padding: 3px 3px 0 2px; }
.panel-title svg { margin-top: 4px; }
.panel-tools { height: 30px; flex: none; display: flex; padding-left: 2px; }
.panel-left .panel-tools { padding-left: 2px; height: 39px; }
.panel-right .panel-tools { padding-left: 0; height: 38px; }
.panel-tools svg { width: 36px; height: 30px; overflow: visible; }
.tree { flex: 1; background: #f2f2f2; border: 1px solid #8f8f8f; }
.layer { display: flex; align-items: center; height: 24px; padding-left: 26px; }
.swatch { width: 16px; height: 16px; background: #2c844b; border: 1px solid #1c3a26; margin: 0 6px 0 9px; }
.layer b { text-decoration: underline; text-underline-offset: 3px; text-decoration-thickness: 1px; padding-top: 2px; }
.splitter { width: 6px; display: flex; align-items: center; justify-content: center; }
.map { width: 685px; background: #fff; border: 1px solid #8f8f8f; }
.land { fill: #2c844b; stroke: #0b1f11; stroke-width: 3; }
.border { fill: none; stroke: #04140a; stroke-width: 3.8; }
.tree-right { padding: 0 0 0 9px; }
.node { height: 25px; display: flex; align-items: center; }
.ar { width: 6px; height: 12px; flex: none; margin-right: 8px; }
.ni { width: 16px; height: 16px; margin: -2px 6px 0 0; }

.statusbar { flex: 1; display: flex; align-items: center; padding: 0 0 3px 204px; white-space: nowrap; }
.s-coord { margin: 0 11px 0 12px; }
.coord { width: 298px; height: 18px; border: 1px solid #8d8d8d; border-radius: 3px; background: #f2f2f2; text-align: center; line-height: 19px; }
.s-scale { margin: 0 10px 0 10px; }
.scale { display: flex; width: 98px; height: 18px; border: 1px solid #8d8d8d; border-radius: 3px; background: #f2f2f2; }
.scale-val { flex: 1; padding: 4px 0 3px 6px; }
.scale-val span { display: flex; height: 9px; align-items: center; overflow: hidden; white-space: pre; }
.scale-btn { width: 22px; border-left: 1px solid #8d8d8d; background: linear-gradient(#fafafa, #cdcdcd); display: flex; align-items: center; justify-content: center; }
.s-rot { margin: 0 11px 0 11px; }
.spin { width: 117px; height: 31px; border: 1px solid #8d8d8d; border-radius: 3px; background: #f2f2f2; display: flex; justify-content: space-between; padding-left: 5px; line-height: 30px; }
.spin-btn { width: 11px; background: #d9d9d9; border-left: 1px solid #a8a8a8; display: flex; flex-direction: column; align-items: center; justify-content: space-between; padding: 5px 0; }
.s-check { margin: 0 8px 0 10px; }
.s-crs { margin: 0 4px 0 19px; }
.s-msg { margin-left: 28px; }
```
FILE: map.js
```js
// Roughens the simplified region borders so they read as surveyed boundaries.
(function () {
  var seed = 7;
  function rnd() {
    seed = (seed * 16807) % 2147483647;
    return seed / 2147483647 - 0.5;
  }
  document.querySelectorAll('#map polygon, #map polyline').forEach(function (el) {
    var pts = el.getAttribute('points').trim().split(/\s+/).map(function (p) { return p.split(',').map(Number); });
    var out = [];
    var closed = el.tagName === 'polygon';
    var count = closed ? pts.length : pts.length - 1;
    for (var i = 0; i < count; i++) {
      var a = pts[i], b = pts[(i + 1) % pts.length];
      var dx = b[0] - a[0], dy = b[1] - a[1];
      var len = Math.hypot(dx, dy);
      var n = Math.max(1, Math.round(len / 6));
      out.push(a.join(','));
      for (var k = 1; k < n; k++) {
        var off = rnd() * 6;
        out.push((a[0] + dx * k / n - dy / len * off).toFixed(1) + ',' + (a[1] + dy * k / n + dx / len * off).toFixed(1));
      }
    }
    if (!closed) out.push(pts[pts.length - 1].join(','));
    el.setAttribute('points', out.join(' '));
  });
})();
```
